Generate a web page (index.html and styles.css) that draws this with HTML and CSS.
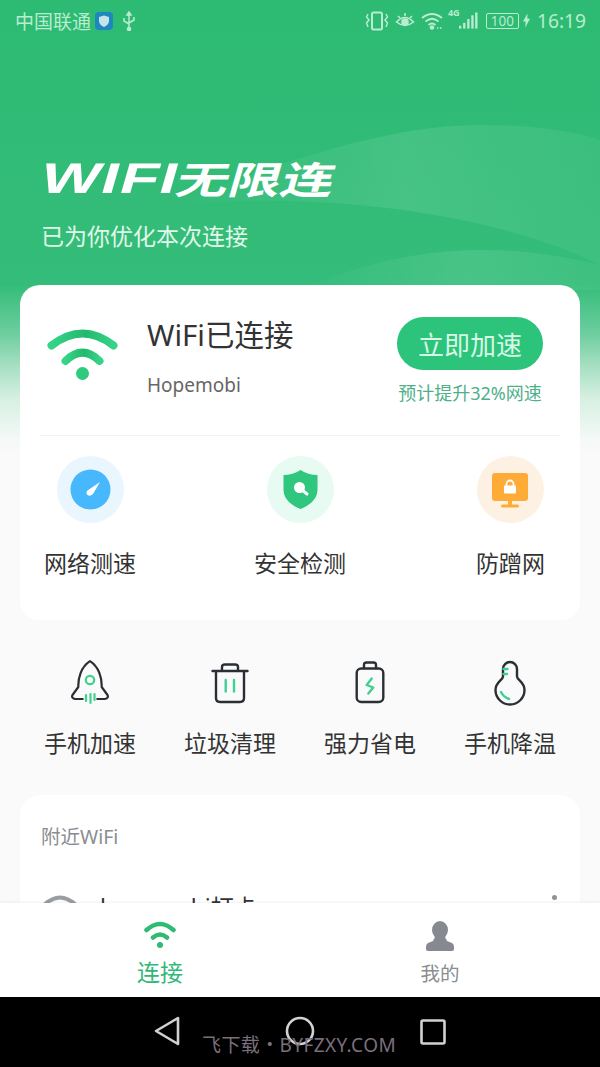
FILE: index.html
```html
<!DOCTYPE html>
<html lang="zh-CN">
<head>
<meta charset="utf-8">
<title>WIFI无限连</title>
<link rel="stylesheet" href="styles.css">
</head>
<body>
<div class="app">
  <main class="main">
    <svg class="waves" viewBox="0 0 600 300" aria-hidden="true">
      <defs><linearGradient id="wv" x1="0" x2="1" y1="0" y2="0"><stop offset="0" stop-color="#fff" stop-opacity="0"/><stop offset=".55" stop-color="#fff" stop-opacity=".1"/><stop offset="1" stop-color="#fff" stop-opacity=".05"/></linearGradient></defs>
      <path fill="url(#wv)" d="M170 205 C260 170 380 125 480 125 C530 125 570 130 600 140 V265 C500 215 330 190 170 205 Z"/>
      <path fill="url(#wv)" d="M300 290 C400 245 500 240 600 265 V290 Z"/>
    </svg>
    <div class="status">
      <div class="status-left">
        <span>中国联通</span>
        <svg class="s-shield" viewBox="0 0 18 18"><rect width="18" height="18" rx="4" fill="#1f86c0"/><path d="M9 3.500 L14 5 V9 C14 12 11.500 14 9 15 C6.500 14 4 12 4 9 V5 Z" fill="#c4e4ea"/></svg>
        <svg class="s-usb" viewBox="0 0 14 20" fill="none" stroke="#b9ecd0" stroke-width="1.500"><path d="M7 2 V18 M2 7 V10 L7 13 M12 6 V9 L7 12"/><circle cx="7" cy="18" r="1.500" fill="#b9ecd0"/><path d="M5 4 L7 1 L9 4 Z" fill="#b9ecd0"/></svg>
      </div>
      <div class="status-right">
        <svg class="s-vib" viewBox="0 0 24 20" fill="none" stroke="#b9ecd0" stroke-width="1.500"><rect x="7" y="1.500" width="10" height="17" rx="1.500" stroke-width="2"/><path d="M3 3 L1.500 6 L4 9 L1.500 12 L3 16 M21 3 L22.500 6 L20 9 L22.500 12 L21 16"/></svg>
        <svg class="s-eye" viewBox="0 0 20 18" fill="none" stroke="#b9ecd0" stroke-width="1.600"><path d="M1.500 10 Q10 1 18.500 10 Q10 17 1.500 10 Z"/><circle cx="10" cy="10" r="3" fill="#b9ecd0"/><path d="M3 4 L5 6 M10 1 V4 M17 4 L15 6"/></svg>
        <svg class="s-wifi" viewBox="0 0 22 18" fill="none" stroke="#b9ecd0" stroke-width="1.700"><path d="M1 6 Q11 -2 21 6 M4.500 9.500 Q11 4 17.500 9.500 M7.500 13 Q11 10 14.500 13"/><circle cx="11" cy="15.500" r="1.500" fill="#b9ecd0"/><path d="M16 16 H21" stroke-dasharray="1.500 1.500"/></svg>
        <span class="s-4g">4G</span>
        <svg class="s-signal" viewBox="0 0 20 20" fill="#b9ecd0"><rect x="0" y="15" width="2.500" height="3"/><rect x="4.300" y="12" width="2.500" height="6"/><rect x="8.600" y="8" width="2.500" height="10"/><rect x="12.900" y="4" width="2.500" height="14"/><rect x="17" y="1" width="2.500" height="17"/></svg>
        <span class="s-batt">100</span>
        <svg class="s-bolt" viewBox="0 0 8 16" fill="#b9ecd0"><path d="M5 0 L0 9 H3 L2.500 16 L8 6 H5 Z"/></svg>
        <span class="s-time">16:19</span>
      </div>
    </div>

    <header class="hero">
      <h1 class="logo"><span class="logo-en">WIFI</span><span class="logo-cn">无限连</span></h1>
      <p class="tagline">已为你优化本次连接</p>
    </header>

    <section class="card card-main">
      <div class="conn">
        <svg class="conn-icon" viewBox="0 0 76 58" fill="none">
          <defs><linearGradient id="wg" x1="0" x2="1" y1="0" y2="0"><stop offset="0" stop-color="#36d487"/><stop offset=".55" stop-color="#22b96f"/><stop offset="1" stop-color="#36d487"/></linearGradient></defs>
          <path d="M6.500 19.500 Q37.500 -4.500 68.500 19.500" stroke="url(#wg)" stroke-width="8" stroke-linecap="round"/>
          <path d="M20.500 35 Q37.500 18 54.500 35" stroke="url(#wg)" stroke-width="8" stroke-linecap="round"/>
          <circle cx="37.500" cy="47.500" r="6.500" fill="#2ecb7e"/>
        </svg>
        <div class="conn-text">
          <div class="conn-title">WiFi已连接</div>
          <div class="conn-name">Hopemobi</div>
        </div>
        <div class="conn-action">
          <button class="boost">立即加速</button>
          <div class="boost-note">预计提升32%网速</div>
        </div>
      </div>
      <div class="features">
        <div class="feature">
          <svg class="f-icon" viewBox="0 0 67 67"><circle cx="33.500" cy="33.500" r="33.500" fill="#eaf6fd"/><circle cx="33.500" cy="33.500" r="20" fill="#47b8fd"/><path d="M43 26 L36 38 Q33 41 30.500 39 Q28.500 37 30.500 34.500 Z" fill="#fff"/></svg>
          <span>网络测速</span>
        </div>
        <div class="feature">
          <svg class="f-icon" viewBox="0 0 67 67"><circle cx="33.500" cy="33.500" r="33.500" fill="#e7fbf2"/><path d="M33.500 14 Q41 19 50.500 19 V34 C50.500 44 41 50 33.500 53 C26 50 16.500 44 16.500 34 V19 Q26 19 33.500 14 Z" fill="#2fc67e"/><circle cx="32.500" cy="31.500" r="5.500" fill="#fff"/><path d="M35 34 L40 38" stroke="#fff" stroke-width="3" stroke-linecap="round"/></svg>
          <span>安全检测</span>
        </div>
        <div class="feature">
          <svg class="f-icon" viewBox="0 0 67 67"><circle cx="33.500" cy="33.500" r="33.500" fill="#fdf1e3"/><rect x="15" y="17" width="36" height="28" rx="3" fill="#ffab38"/><rect x="31" y="45" width="4" height="4" fill="#ffab38"/><rect x="24" y="48.500" width="18" height="3" rx="1.500" fill="#ffab38"/><rect x="27" y="29.500" width="12" height="8" rx="1" fill="#fff"/><path d="M29.500 30 V28 A3.500 3.500 0 0 1 36.500 28 V30" fill="none" stroke="#fff" stroke-width="1.800"/></svg>
          <span>防蹭网</span>
        </div>
      </div>
    </section>

    <nav class="tools">
      <div class="tool">
        <svg class="t-icon" viewBox="0 0 40 46" fill="none" stroke="#2b2f33" stroke-width="2.200" stroke-linecap="round" stroke-linejoin="round">
          <path d="M12.700 39 H5 Q1 38 2.500 35 L8.300 27 C8 18 11 7 20 1.200 C29 7 32 18 31.700 27 L37.500 35 Q39 38 35 39 H27.300"/>
          <g stroke="#3fd092"><circle cx="20" cy="20" r="4.200"/><path d="M16 35 V41 M20.500 34 V43 M24.500 34 V40"/></g>
        </svg>
        <span>手机加速</span>
      </div>
      <div class="tool">
        <svg class="t-icon" viewBox="0 0 40 46" fill="none" stroke="#2b2f33" stroke-width="2.400" stroke-linecap="round" stroke-linejoin="round">
          <path d="M2.500 11 H37.500 M6 11 V38 Q6 42 10 42 H30 Q34 42 34 38 V11 M12 10 V7 Q12 4.500 15 4.500 H25 Q28 4.500 28 7 V10"/>
          <path stroke="#3fd092" d="M15.700 20 V31.500 M24 20 V31.500"/>
        </svg>
        <span>垃圾清理</span>
      </div>
      <div class="tool">
        <svg class="t-icon" viewBox="0 0 40 46" fill="none" stroke="#2b2f33" stroke-width="2.400" stroke-linecap="round" stroke-linejoin="round">
          <rect x="6.700" y="8.500" width="26.600" height="33.500" rx="4.500"/>
          <path d="M14 8 V5 Q14 2.500 16.500 2.500 H23.500 Q26 2.500 26 5 V8"/>
          <path stroke="#3fd092" d="M21.700 18.500 L16.700 25 L23.300 27.500 L18.300 33.500"/>
        </svg>
        <span>强力省电</span>
      </div>
      <div class="tool">
        <svg class="t-icon" viewBox="0 0 40 46" fill="none" stroke="#2b2f33" stroke-width="2.400" stroke-linecap="round" stroke-linejoin="round">
          <path d="M13 9 A7 7 0 0 1 27 9 V16.500 C27 20 34.500 22 34.500 30 A14.500 14.500 0 0 1 5.500 30 C5.500 22 13 20 13 16.500 Z"/>
          <path stroke="#3fd092" d="M13.500 9 H17.500 M13.500 14 H17 M11 32 Q13.500 37 19 39"/>
        </svg>
        <span>手机降温</span>
      </div>
    </nav>

    <section class="card card-near">
      <h2 class="near-title">附近WiFi</h2>
      <div class="near-row">
        <svg class="near-icon" viewBox="0 0 38 30" fill="none" stroke="#9a9ea3" stroke-width="4"><path d="M2 13 Q19 -4 36 13 M9 20 Q19 9 29 20"/></svg>
        <span class="near-name">hopemobi打卡</span>
        <span class="near-more"></span>
      </div>
    </section>
  </main>

  <footer class="tabbar">
    <div class="tab tab-on">
      <svg class="tab-icon" viewBox="0 0 32 30" fill="none" stroke="#2ebc75" stroke-width="4.500" stroke-linecap="round">
        <path d="M2.500 9 Q16 -3 29.500 9 M9 16.500 Q16 10.500 23 16.500"/><circle cx="16" cy="24" r="3" fill="#2ebc75" stroke="none"/>
      </svg>
      <span>连接</span>
    </div>
    <div class="tab">
      <svg class="tab-icon" viewBox="0 0 28 30" fill="#868a90"><ellipse cx="14" cy="9" rx="8" ry="9"/><path d="M9 16 H19 L21 20 L26 22 Q28 23 28 26 V28 Q28 30 26 30 H2 Q0 30 0 28 V26 Q0 23 2 22 L7 20 Z"/></svg>
      <span>我的</span>
    </div>
  </footer>

  <div class="navbar">
    <svg class="nav-icon nav-back" viewBox="0 0 26 30" fill="none" stroke="#d2d2d2" stroke-width="2.600" stroke-linejoin="round"><path d="M2 15 L24 2 V28 Z"/></svg>
    <svg class="nav-icon nav-home" viewBox="0 0 30 30" fill="none" stroke="#d2d2d2" stroke-width="2.600"><circle cx="15" cy="15" r="13"/></svg>
    <svg class="nav-icon nav-recent" viewBox="0 0 26 26" fill="none" stroke="#d2d2d2" stroke-width="2.600"><rect x="1.500" y="1.500" width="23" height="23" rx="1.500"/></svg>
    <div class="watermark">飞下载・BYFZXY.COM</div>
  </div>
</div>
</body>
</html>
```

FILE: styles.css
```css
* { box-sizing: border-box; margin: 0; padding: 0; }
html, body { width: 600px; height: 1067px; overflow: hidden; }
body { font-family: "Noto Sans", "Noto Sans CJK SC", sans-serif; color: #333; background: #fafafa; }

.app { display: flex; flex-direction: column; height: 1067px; }

.main {
  position: relative;
  flex: 1;
  min-height: 0;
  overflow: hidden;
  background: linear-gradient(180deg, #2dba72 0, #34bd7a 285px, #6dcd9e 333px, #a8e0c3 367px, #d8f0e3 400px, #f5f9f7 440px, #fafafa 455px);
}
.waves { position: absolute; left: 0; top: 0; width: 600px; height: 300px; }

.status {
  position: relative;
  display: flex;
  justify-content: space-between;
  align-items: center;
  height: 41px;
  padding: 0 14px 0 15px;
  color: #b9ecd0;
  font-size: 19px;
}
.status-left, .status-right { display: flex; align-items: center; }
.s-shield { width: 18px; height: 18px; margin-left: 4px; }
.s-usb { width: 14px; height: 20px; margin-left: 9px; }
.s-vib { width: 24px; height: 20px; }
.s-eye { width: 20px; height: 18px; margin-left: 6px; }
.s-wifi { width: 22px; height: 18px; margin-left: 6px; }
.s-4g { font-size: 9px; font-weight: 700; width: 11px; margin-left: 5px; align-self: flex-start; line-height: 12px; }
.s-signal { width: 19px; height: 20px; }
.s-batt {
  width: 33px; height: 16px; margin-left: 8px;
  border: 1px solid #b9ecd0; border-radius: 2px;
  font-size: 13.500px; line-height: 14px; text-align: center;
}
.s-bolt { width: 7px; height: 15px; margin-left: 4px; }
.s-time { font-size: 19.200px; margin-left: 7px; }

.hero { position: relative; padding: 119px 0 0 37px; height: 244px; }
.logo {
  display: flex;
  align-items: center;
  height: 36px;
  color: #fff;
  font-weight: 700;
  transform: skewX(-16deg);
  transform-origin: left bottom;
}
.logo-en {
  flex: none;
  width: 136px;
  font-family: "Liberation Sans", sans-serif;
  font-size: 43px;
  letter-spacing: 1px;
  line-height: 36px;
  transform: scaleX(1.45);
  transform-origin: left center;
}
.logo-cn {
  flex: none;
  width: 157px;
  font-family: "Noto Sans CJK SC", sans-serif;
  font-size: 38px;
  line-height: 36px;
  white-space: nowrap;
  transform: scaleX(1.38);
  transform-origin: left center;
}
.tagline { margin-top: 23px; padding-left: 4px; font-size: 23px; line-height: 34px; color: #e0f7ea; }

.card { position: relative; background: #fff; border-radius: 20px; margin: 0 20px; }
.card-main { height: 335px; padding: 0 20px; }

.conn { display: flex; height: 151px; border-bottom: 1px solid #f3f3f3; }
.conn-icon { width: 76px; height: 58px; margin: 41px 0 0 5px; flex: none; }
.conn-text { margin-left: 26px; flex: 1; }
.conn-title { margin-top: 28px; font-size: 29.500px; line-height: 44px; color: #333; }
.conn-name { margin-top: 15px; font-size: 19px; line-height: 26px; color: #666; }
.conn-action { width: 146px; margin-right: 17px; display: flex; flex-direction: column; align-items: center; }
.boost {
  margin-top: 32px;
  width: 146px; height: 53px;
  border: 0; border-radius: 27px;
  background: #2cc47a; color: #d9f7e7;
  font-family: inherit; font-size: 26px;
}
.boost-note { margin-top: 10px; font-size: 18px; line-height: 26px; color: #4fb088; white-space: nowrap; }

.features {
  display: grid;
  grid-template-columns: 210px 222px auto;
  padding: 20px 0 0 4px;
}
.feature { display: flex; flex-direction: column; align-items: center; width: max-content; font-size: 23px; line-height: 34px; color: #333; }
.f-icon { width: 67px; height: 67px; margin-bottom: 23px; }

.tools {
  position: relative;
  display: grid;
  grid-template-columns: repeat(4, 1fr);
  margin: 40px 20px 0;
  height: 135px;
}
.tool { display: flex; flex-direction: column; align-items: center; font-size: 23px; line-height: 34px; color: #333; }
.t-icon { width: 40px; height: 46px; margin-bottom: 20px; }

.card-near { padding: 25px 21px 0; height: 200px; }
.near-title { font-weight: 400; font-size: 19.500px; line-height: 34px; color: #8a8d91; }
.near-row { display: flex; align-items: flex-start; margin-top: 31px; position: relative; }
.near-icon { width: 38px; height: 30px; flex: none; margin-top: 8px; }
.near-name { margin-left: 21px; font-size: 23px; line-height: 30px; margin-top: 7px; color: #333; }
.near-more { position: absolute; right: 2px; top: 10px; width: 5px; height: 5px; border-radius: 50%; background: #8f9296; box-shadow: 0 11px 0 #8f9296; }

.tabbar {
  position: relative;
  flex: none;
  display: grid;
  grid-template-columns: 1fr 1fr;
  height: 94px;
  padding: 0 20px;
  background: #fff;
  box-shadow: 0 -1px 3px rgba(0, 0, 0, .06);
}
.tab { display: flex; flex-direction: column; align-items: center; padding-top: 18px; font-size: 19.500px; line-height: 30px; color: #8a8d91; }
.tab-icon { height: 30px; width: 32px; margin-bottom: 8px; }
.tab-on { font-size: 23px; color: #2fb877; }
.tab-on .tab-icon { margin-bottom: 6px; }

.navbar {
  position: relative;
  flex: none;
  display: flex;
  align-items: flex-start;
  height: 70px;
  padding: 20px 0 0 154px;
  background: #000;
}
.nav-icon { flex: none; }
.nav-back { width: 26px; height: 30px; margin-top: -1px; }
.nav-home { width: 30px; height: 30px; margin: -1px 0 0 105px; }
.nav-recent { width: 26px; height: 26px; margin: 2px 0 0 105px; }
.watermark {
  position: absolute;
  left: 202px; top: 35px;
  font-size: 19px;
  letter-spacing: .4px;
  line-height: 26px;
  color: #7b6f7c;
  white-space: nowrap;
}
```
